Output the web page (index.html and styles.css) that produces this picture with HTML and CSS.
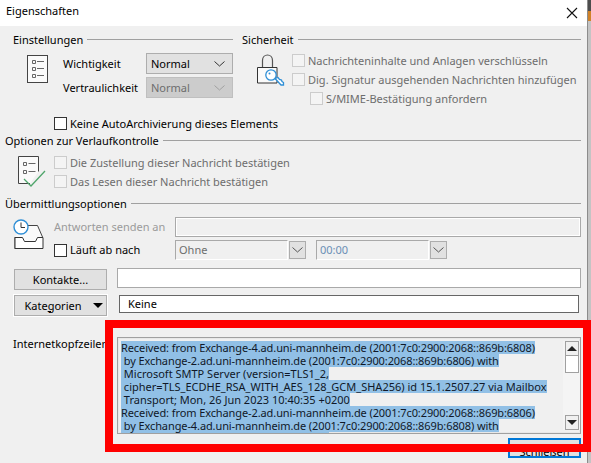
FILE: index.html
```html
<!DOCTYPE html>
<html lang="de">
<head>
<meta charset="utf-8">
<title>Eigenschaften</title>
<link rel="stylesheet" href="styles.css">
</head>
<body>
<div class="screen">
  <div class="dialog">
    <header class="titlebar">
      <span>Eigenschaften</span>
      <svg class="close" width="12" height="12" viewBox="0 0 12 12"><path d="M1 1l10 10M11 1L1 11" stroke="#111" stroke-width="1.1" fill="none"/></svg>
    </header>

    <div class="columns">
      <section class="col-left">
        <div class="legend"><span>Einstellungen</span><i></i></div>
        <div class="settings">
          <svg class="icon-list" width="22" height="29" viewBox="0 0 22 29"><rect x=".5" y=".5" width="20" height="27" fill="#fafafa" stroke="#444"/><path d="M5.5 5.5h3v3h-3zM5.5 12.5h3v3h-3zM5.5 19.5h3v3h-3z" fill="none" stroke="#666"/><path d="M10 6.5h7M10 13.5h7M10 20.5h7" stroke="#666" fill="none"/></svg>
          <div class="fields">
            <span>Wichtigkeit</span>
            <div class="select"><span>Normal</span><svg width="11" height="6" viewBox="0 0 11 6"><path d="M.5.5l5 4.5 5-4.5" stroke="#333" fill="none"/></svg></div>
            <span>Vertraulichkeit</span>
            <div class="select off"><span>Normal</span><svg width="11" height="6" viewBox="0 0 11 6"><path d="M.5.5l5 4.5 5-4.5" stroke="#a0a0a0" fill="none"/></svg></div>
          </div>
        </div>
      </section>
      <section class="col-right">
        <div class="legend"><span>Sicherheit</span><i></i></div>
        <div class="security">
          <svg class="icon-lock" width="28" height="32" viewBox="0 0 28 32"><path d="M5.5 13V6.5C5.5 3 8 1 10.5 1S15.500 3 15.500 6.500V13" fill="none" stroke="#555" stroke-width="1.200"/><path d="M.5 13.500h19.500v15.500H.5z" fill="#fafafa" stroke="#333"/><g fill="#fff" stroke="#2f8fd6" stroke-width="1.300"><path d="M18 24.500l6 6.500h2.500v-2.500l-1.500-1-.5-1.500-2-.5-1.500-2z"/><circle cx="14" cy="21" r="5.200"/></g><circle cx="12.500" cy="19.500" r="1" fill="#2f8fd6"/></svg>
          <div class="sec-options">
            <label class="check off"><b></b>Nachrichteninhalte und Anlagen verschlüsseln</label>
            <label class="check off"><b></b>Dig. Signatur ausgehenden Nachrichten hinzufügen</label>
            <label class="check off nested"><b></b>S/MIME-Bestätigung anfordern</label>
          </div>
        </div>
      </section>
    </div>
    <label class="check archive"><b></b>Keine AutoArchivierung dieses Elements</label>

    <div class="body">
      <div class="legend tracking"><span>Optionen zur Verlaufkontrolle</span><i></i></div>
      <div class="receipts">
        <svg class="icon-check" width="28" height="31" viewBox="0 0 28 31"><path d="M12 27.500H.5V.5h20v15" fill="#fafafa" stroke="#444"/><path d="M5.500 6.500h3v3h-3zM5.500 14.500h3v3h-3z" fill="none" stroke="#666"/><path d="M10.500 7.500h7M10.500 15.500h7" stroke="#666" fill="none"/><path d="M6 23l7 7L27 15" fill="none" stroke="#4fa56b" stroke-width="1.300"/></svg>
        <div>
          <label class="check off"><b></b>Die Zustellung dieser Nachricht bestätigen</label>
          <label class="check off"><b></b>Das Lesen dieser Nachricht bestätigen</label>
        </div>
      </div>

      <div class="legend delivery-legend"><span>Übermittlungsoptionen</span><i></i></div>
      <div class="delivery">
        <svg class="icon-tray" width="32" height="30" viewBox="0 0 32 30"><path d="M10 6.500h14.500L29.500 18v12H2V18" fill="#fafafa" stroke="#444"/><path d="M2 18.500h7.500l2 4h11l2-4h5.500V29.500H2z" fill="#fff" stroke="#333"/><circle cx="8" cy="8" r="7" fill="#fff" stroke="#2f8fd6" stroke-width="1.400"/><path d="M8 3.500V8.500h4" fill="none" stroke="#333"/></svg>
        <span class="muted">Antworten senden an</span>
        <div class="field off-field"></div>
        <label class="check expire"><b></b>Läuft ab nach</label>
        <div class="expiry">
          <div class="combo"><span>Ohne</span></div>
          <div class="drop"><svg width="11" height="6" viewBox="0 0 11 6"><path d="M.5.5l5 4.500 5-4.500" stroke="#555" fill="none"/></svg></div>
          <div class="combo time"><span>00:00</span></div>
          <div class="drop"><svg width="11" height="6" viewBox="0 0 11 6"><path d="M.5.5l5 4.500 5-4.500" stroke="#555" fill="none"/></svg></div>
        </div>
      </div>

      <div class="contact-row">
        <button class="btn" type="button">Kontakte...</button>
        <div class="field white"></div>
      </div>
      <div class="category-row">
        <button class="btn cat" type="button"><span>Kate<u>g</u>orien</span><em></em></button>
        <div class="field dark">Keine</div>
      </div>

      <div class="headers-row">
        <span class="headers-label">Internetkopfzeilen</span>
        <div class="headers">
          <div class="headers-text">
            <span class="tight">Received: from Exchange-4.ad.uni-mannheim.de (2001:7c0:2900:2068::869b:6808)</span>
            <span class="tight">&nbsp;by Exchange-2.ad.uni-mannheim.de (2001:7c0:2900:2068::869b:6806) with</span>
            <span>&nbsp;Microsoft SMTP Server (version=TLS1_2,</span>
            <span>&nbsp;cipher=TLS_ECDHE_RSA_WITH_AES_128_GCM_SHA256) id 15.1.2507.27 via Mailbox</span>
            <span>&nbsp;Transport; Mon, 26 Jun 2023 10:40:35 +0200</span>
            <span class="tight">Received: from Exchange-2.ad.uni-mannheim.de (2001:7c0:2900:2068::869b:6806)</span>
            <span class="tight">&nbsp;by Exchange-4.ad.uni-mannheim.de (2001:7c0:2900:2068::869b:6808) with</span>
            <span>&nbsp;Microsoft SMTP Server (version=TLS1_2,</span>
          </div>
          <div class="scrollbar">
            <div class="arrow"><em class="up"></em></div>
            <div class="thumb"></div>
            <div class="track"></div>
            <div class="arrow"><em class="down"></em></div>
          </div>
        </div>
      </div>

      <div class="footer"><button class="btn primary" type="button">Schließen</button></div>
    </div>
  </div>
  <div class="edge"><i class="e1"></i><i class="e2"></i><i class="e3"></i></div>
  <div class="highlight"></div>
</div>
</body>
</html>
```

FILE: styles.css
```css
* { box-sizing: border-box; }
html, body { margin: 0; padding: 0; }
body { width: 591px; height: 463px; overflow: hidden; background: #fff; font: 11px/14px "Noto Sans", "Open Sans", sans-serif; color: #000; }
.screen { position: relative; display: flex; width: 591px; height: 463px; overflow: hidden; }
.dialog { width: 588px; height: 463px; flex: none; background: #f0f0f0; border-right: 1px solid #8c8c8c; overflow: hidden; }
.edge { flex: 1; display: flex; flex-direction: column; }
.edge .e1 { height: 11px; background: #4d4d4d; }
.edge .e2 { height: 10px; background: #d08228; }
.edge .e3 { flex: 1; background: #c4c4c4; }

.titlebar { height: 26px; background: #fff; display: flex; align-items: center; justify-content: space-between; padding: 0 9px 4px 6px; }
.close { margin-top: 3px; }

.legend { display: flex; align-items: center; gap: 4px; height: 14px; white-space: nowrap; }
.legend i { flex: 1; height: 1px; background: #a0a0a0; margin-top: -1px; }

.columns { display: flex; height: 81px; margin-top: 7px; padding-left: 13px; }
.col-left { width: 220px; }
.col-right { width: 339px; margin-left: 9px; }

.settings { display: flex; padding-left: 14px; }
.icon-list { margin-top: 8px; flex: none; }
.fields { display: grid; grid-template-columns: 83px 87px; grid-auto-rows: 21px; row-gap: 3px; margin: 6px 0 0 14px; align-items: center; }
.select { display: flex; align-items: center; justify-content: space-between; height: 21px; padding: 0 7px 0 4px; background: #e1e1e1; border: 1px solid #adadad; }
.select.off { background: #cccccc; border-color: #bfbfbf; color: #6d6d6d; }

.security { display: flex; padding-left: 15px; }
.icon-lock { flex: none; margin-top: 7px; }
.sec-options { margin: 4px 0 0 7px; white-space: nowrap; }

.check { display: flex; align-items: center; gap: 3px; height: 19px; white-space: nowrap; }
.check b { width: 13px; height: 13px; flex: none; background: #fff; border: 1px solid #333; }
.check.off { color: #6d6d6d; }
.check.off b { background: #f4f4f4; border-color: #cccccc; }
.check.nested { margin-left: 18px; }
.archive { margin-left: 54px; }

.body { padding: 0 6px 0 5px; }
.tracking { margin-top: 1px; }
.receipts { display: flex; margin-top: 5px; padding-left: 13px; }
.icon-check { flex: none; margin-top: 3px; }
.receipts > div { margin-left: 8px; }

.delivery-legend { margin-top: 6px; }
.delivery { display: grid; grid-template-columns: 49px 121px 1fr; grid-template-rows: 20px 20px; row-gap: 3px; margin-top: 6px; align-items: center; }
.icon-tray { grid-column: 1; grid-row: 1 / span 2; margin: -10px 0 0 8px; }
.muted { color: #9b9b9b; white-space: nowrap; }
.field { height: 20px; border: 1px solid #a9a9a9; }
.off-field { background: #f0f0f0; box-shadow: inset 0 0 0 1px #fff; }
.expire { grid-column: 2; }
.expiry { display: flex; align-items: center; }
.combo { width: 113px; height: 20px; padding-left: 3px; line-height: 17px; border: 1px solid #a9a9a9; border-right-color: #fff; border-bottom-color: #fff; color: #6d6d6d; background: #f0f0f0; }
.drop { width: 17px; height: 18px; margin-left: 1px; display: flex; align-items: center; justify-content: center; background: #e1e1e1; border: 1px solid #adadad; }
.time { margin-left: 10px; color: #6b8fb5; }

.contact-row { display: flex; margin-top: 8px; padding-left: 9px; }
.btn { font: inherit; color: inherit; padding: 0; height: 21px; width: 93px; flex: none; background: #e1e1e1; border: 1px solid #adadad; }
.contact-row .btn { margin-top: 1px; }
.contact-row .field { flex: 1; margin-left: 10px; }
.white { background: #fff; }

.category-row { display: flex; margin-top: 5px; padding-left: 9px; }
.cat { display: flex; align-items: center; justify-content: center; gap: 12px; padding-left: 7px; box-shadow: 0 0 0 1px #fff; }
.cat em { width: 0; height: 0; border: 5px solid transparent; border-top: 5px solid #000; border-bottom: 0; }
.dark { flex: 1; height: 18px; margin: 0 2px 0 12px; padding-left: 8px; background: #fff; border-color: #666; line-height: 15px; }

.headers-row { display: flex; margin-top: 21px; padding-left: 8px; }
.headers-label { width: 104px; flex: none; white-space: nowrap; }
.headers { flex: 1; display: flex; height: 97px; border: 1px solid #a0a0a0; box-shadow: inset 0 0 0 1px #e8e8e8; }
.headers-text { flex: 1; overflow: hidden; padding: 3px 0 2px 3px; line-height: 13px; white-space: nowrap; }
.headers-text span { display: table; background: #91c0e6; color: #101828; }
.headers-text .tight { letter-spacing: -.1px; }
.scrollbar { width: 17px; flex: none; margin: 3px 0; padding: 0 1px 0 2px; display: flex; flex-direction: column; background: #f4f4f4; }
.arrow { height: 15px; flex: none; display: flex; align-items: center; justify-content: center; background: #f0f0f0; border: 1px solid #a0a0a0; }
.arrow em { width: 0; height: 0; border: 5px solid transparent; }
.arrow .up { border-top: 0; border-bottom: 5px solid #222; }
.arrow .down { border-bottom: 0; border-top: 5px solid #222; }
.thumb { height: 17px; flex: none; background: #fff; border: 1px solid #a0a0a0; border-top: 0; }
.track { flex: 1; }

.footer { display: flex; justify-content: flex-end; margin-top: 4px; }
.primary { width: 73px; height: 20px; padding-top: 5px; border: 2px solid #0078d7; }

.highlight { position: absolute; left: 105px; top: 320px; width: 486px; height: 132px; border: 8px solid #ff0000; }
```
